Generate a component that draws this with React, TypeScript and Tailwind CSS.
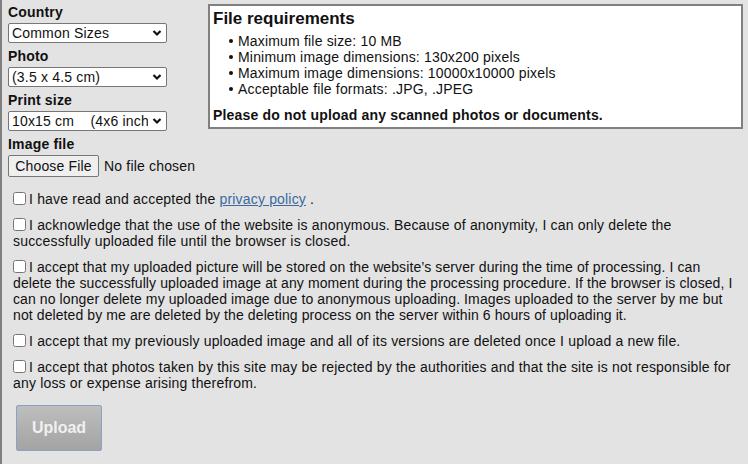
import React from 'react';

const font = {fontFamily: '"Liberation Sans", Arial, sans-serif'};

const Chevron = () => (
  <svg className="pointer-events-none absolute right-[4px] top-1/2 -translate-y-1/2" width="10" height="7" viewBox="0 0 10 7">
    <path d="M1.5 1.5 L5 5 L8.5 1.5" fill="none" stroke="#111" strokeWidth="2.2" />
  </svg>
);

const Field = ({label, value}: {label: string; value: string}) => (
  <div className="flex flex-col">
    <label className="font-bold leading-[16px]">{label}</label>
    <div className="relative mt-[3px] h-[20px] w-[159px] border border-[#767676] bg-white rounded-[2px] overflow-hidden">
      <div className="whitespace-pre pl-[3px] mr-[18px] leading-[18px] overflow-hidden">{value}</div>
      <Chevron />
    </div>
  </div>
);

const requirements = [
  'Maximum file size: 10 MB',
  'Minimum image dimensions: 130x200 pixels',
  'Maximum image dimensions: 10000x10000 pixels',
  'Acceptable file formats: .JPG, .JPEG',
];

// the long clause sits a touch tighter so it breaks where the original does
const terms: {text: React.ReactNode; tight?: boolean}[] = [
  {text: <>I have read and accepted the <a href="#" className="text-[#3b6aa0] underline">privacy policy</a> .</>},
  {text: 'I acknowledge that the use of the website is anonymous. Because of anonymity, I can only delete the successfully uploaded file until the browser is closed.'},
  {text: 'I accept that my uploaded picture will be stored on the website’s server during the time of processing. I can delete the successfully uploaded image at any moment during the processing procedure. If the browser is closed, I can no longer delete my uploaded image due to anonymous uploading. Images uploaded to the server by me but not deleted by me are deleted by the deleting process on the server within 6 hours of uploading it.', tight: true},
  {text: 'I accept that my previously uploaded image and all of its versions are deleted once I upload a new file.'},
  {text: 'I accept that photos taken by this site may be rejected by the authorities and that the site is not responsible for any loss or expense arising therefrom.'},
];

export default function App() {
  return (
    <div style={font} className="min-h-[464px] w-[748px] bg-[#e3e3e3] border-l-2 border-[#808080] text-[14px] tracking-[0.18px] text-[#111]">
      <div className="flex pt-[4px]">
        <div className="w-[206px] pl-[6px] flex flex-col gap-[5px]">
          <Field label="Country" value="Common Sizes" />
          <Field label="Photo" value="(3.5 x 4.5 cm)" />
          <Field label="Print size" value="10x15 cm    (4x6 inch)" />
          <div className="flex flex-col">
            <label className="font-bold leading-[16px]">Image file</label>
            <div className="mt-[3px] flex items-center">
              <button className="h-[22px] w-[91px] border border-[#767676] bg-[#efefef] rounded-[2px] leading-[20px]">Choose File</button>
              <span className="ml-[5px]">No file chosen</span>
            </div>
          </div>
        </div>
        <div className="w-[535px] h-[125px] border-2 border-[#808080] bg-white px-[3px] pt-[3px]">
          <h2 className="font-bold text-[17px] leading-[19px] tracking-normal">File requirements</h2>
          <ul className="mt-[5px] leading-[16px]">
            {requirements.map((r) => (
              <li key={r} className="flex items-center">
                <span className="ml-[16px] mr-[5px] h-[4px] w-[4px] rounded-full bg-[#111]" />
                {r}
              </li>
            ))}
          </ul>
          <p className="mt-[10px] font-bold leading-[16px]">Please do not upload any scanned photos or documents.</p>
        </div>
      </div>
      <div className="pl-[11px] pr-[6px] pt-[14px] flex flex-col gap-[10px]">
        {terms.map((t, i) => (
          <p key={i} className={t.tight ? 'leading-[16px] tracking-[0.1px]' : 'leading-[16px]'}>
            <input type="checkbox" className="w-[13px] h-[13px] mr-[3px] align-[-2px] relative -top-[1px]" />
            {t.text}
          </p>
        ))}
      </div>
      <div className="pl-[14px] pt-[14px]">
        <button disabled className="w-[86px] h-[46px] rounded-[2px] border border-[#8aa3c4] bg-gradient-to-b from-[#bebebe] to-[#a3a3a3] text-[#f0f0f0] font-bold text-[16px] tracking-normal">Upload</button>
      </div>
    </div>
  );
}
